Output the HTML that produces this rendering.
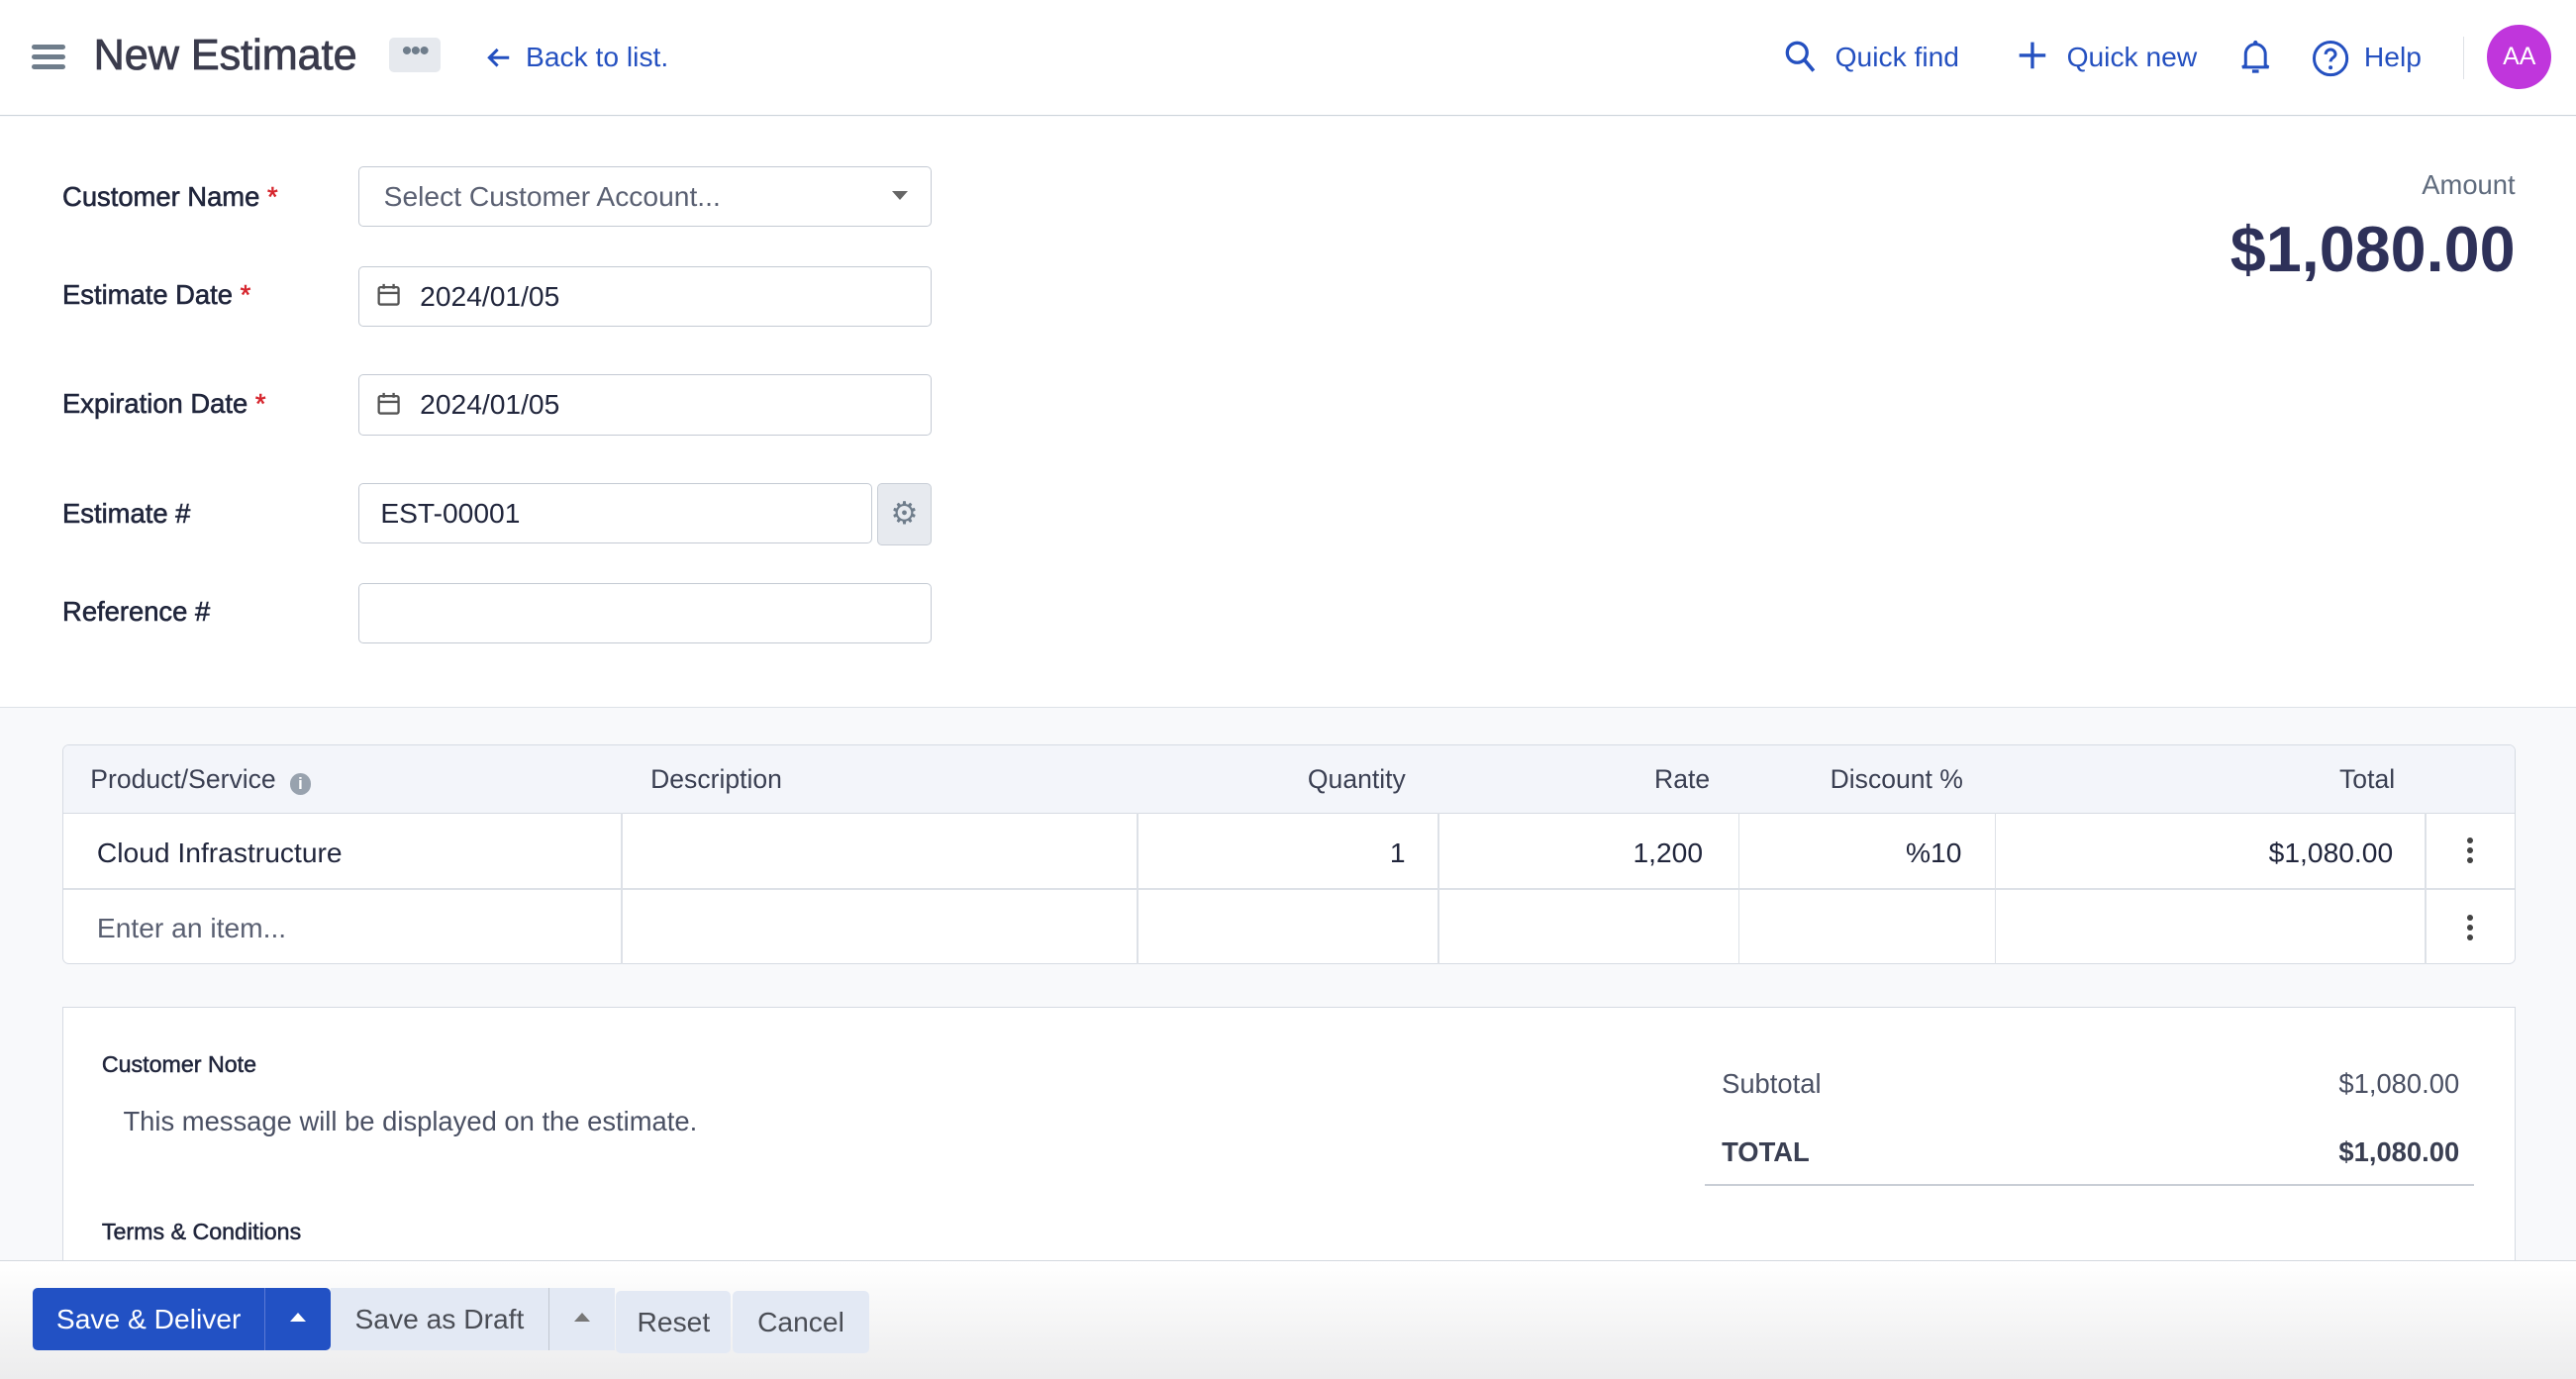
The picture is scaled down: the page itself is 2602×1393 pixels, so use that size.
<!DOCTYPE html>
<html><head><meta charset="utf-8"><style>
html,body{margin:0;padding:0;}
body{width:1568px;height:839px;zoom:1.65944;overflow:hidden;font-family:"Liberation Sans",sans-serif;color:#21263c;background:#f8f9fb;position:relative;}
.abs{position:absolute;}
.hdr{left:0;top:0;width:1568px;height:70px;background:#fff;border-bottom:1px solid #cdd4da;}
.form{left:0;top:71px;width:1568px;height:359px;background:#fff;border-bottom:1px solid #dde2e7;}
.lbl{font-size:16.5px;color:#21263c;left:38px;-webkit-text-stroke:0.35px #21263c;}
.lbl b{color:#d6262e;font-weight:normal;-webkit-text-stroke:0.35px #d6262e;}
.inp{left:218px;width:349px;height:37px;border:1px solid #c4cad3;border-radius:3px;background:#fff;box-sizing:border-box;font-size:17px;line-height:35px;}
.blue{color:#2450c0;}
.tbl{left:38px;top:453px;width:1493px;height:134px;border:1px solid #d6dbe3;border-radius:4px;background:#fff;box-sizing:border-box;overflow:hidden;}
.th{font-size:16px;color:#3a3f52;top:465px;}
.vl{top:495px;height:92px;width:1px;background:#dde1e7;}
.td{font-size:17px;}
.btn{top:784px;height:38px;line-height:38px;font-size:17px;text-align:center;}
</style></head><body>
<div class="abs hdr"></div>
<div class="abs" style="left:19px;top:27px;width:21px;height:3px;background:#6f7d8b;border-radius:2px"></div>
<div class="abs" style="left:19px;top:33px;width:21px;height:3px;background:#6f7d8b;border-radius:2px"></div>
<div class="abs" style="left:19px;top:39px;width:21px;height:3px;background:#6f7d8b;border-radius:2px"></div>
<div class="abs" style="left:57px;top:19px;font-size:26px;color:#3a3b4c;-webkit-text-stroke:0.5px #3a3b4c;">New Estimate</div>
<div class="abs" style="left:237px;top:23px;width:31px;height:21px;background:#e6e9ee;border-radius:3px;text-align:center;line-height:17px;color:#6f7d8b;font-size:18px;letter-spacing:-1px;">•••</div>
<svg class="abs" style="left:296px;top:27px" width="16" height="16" viewBox="0 0 16 16"><path d="M14 8H2M7 3L2 8l5 5" stroke="#2450c0" stroke-width="1.8" fill="none"/></svg>
<div class="abs blue" style="left:320px;top:25px;font-size:17px;">Back to list.</div>
<svg class="abs" style="left:1086px;top:24px" width="20" height="22" viewBox="0 0 20 22"><circle cx="8" cy="8" r="6" stroke="#2450c0" stroke-width="2" fill="none"/><path d="M12.5 12.5L18 19" stroke="#2450c0" stroke-width="2.2"/></svg>
<div class="abs blue" style="left:1117px;top:25px;font-size:17px;">Quick find</div>
<svg class="abs" style="left:1228px;top:25px" width="18" height="18"><path d="M9 1v16M1 9h16" stroke="#2450c0" stroke-width="2"/></svg>
<div class="abs blue" style="left:1258px;top:25px;font-size:17px;">Quick new</div>
<svg class="abs" style="left:1362px;top:23px" width="22" height="24" viewBox="0 0 22 24"><path d="M5 17V10a6 6 0 0112 0v7l2 1H3z" stroke="#2450c0" stroke-width="1.8" fill="none"/><circle cx="11" cy="3" r="1.3" fill="#2450c0"/><path d="M9 20.5h4" stroke="#2450c0" stroke-width="2"/></svg>
<svg class="abs" style="left:1407px;top:24px" width="23" height="23"><circle cx="11.5" cy="11.5" r="10" stroke="#2450c0" stroke-width="1.8" fill="none"/><path d="M8.5 9a3 3 0 116 0c0 2-3 2-3 4.5" stroke="#2450c0" stroke-width="1.8" fill="none"/><circle cx="11.5" cy="17" r="1.2" fill="#2450c0"/></svg>
<div class="abs blue" style="left:1439px;top:25px;font-size:17px;">Help</div>
<div class="abs" style="left:1499px;top:22px;width:1px;height:26px;background:#dde1e6"></div>
<div class="abs" style="left:1514px;top:15px;width:39px;height:39px;border-radius:50%;background:#c036dc;color:#fff;font-size:15px;text-align:center;line-height:39px;">AA</div>

<div class="abs form"></div>
<div class="abs lbl" style="top:110px">Customer Name <b>*</b></div>
<div class="abs inp" style="top:101px;padding-left:15px;color:#5a6072">Select Customer Account...<span style="position:absolute;right:14px;top:15px;border:5px solid transparent;border-top:6px solid #666;"></span></div>
<div class="abs lbl" style="top:170px">Estimate Date <b>*</b></div>
<div class="abs inp" style="top:162px;padding-left:37px">2024/01/05<svg style="position:absolute;left:11px;top:10px" width="14" height="14"><rect x="1" y="2.5" width="12" height="10.5" rx="1" stroke="#555" stroke-width="1.4" fill="none"/><path d="M1 6h12M4 0.5v3M10 0.5v3" stroke="#555" stroke-width="1.4"/></svg></div>
<div class="abs lbl" style="top:236px">Expiration Date <b>*</b></div>
<div class="abs inp" style="top:228px;padding-left:37px">2024/01/05<svg style="position:absolute;left:11px;top:10px" width="14" height="14"><rect x="1" y="2.5" width="12" height="10.5" rx="1" stroke="#555" stroke-width="1.4" fill="none"/><path d="M1 6h12M4 0.5v3M10 0.5v3" stroke="#555" stroke-width="1.4"/></svg></div>
<div class="abs lbl" style="top:303px">Estimate #</div>
<div class="abs inp" style="top:294px;width:313px;padding-left:13px">EST-00001</div>
<div class="abs" style="left:534px;top:294px;width:33px;height:38px;background:#e7eaef;border:1px solid #c8ced6;box-sizing:border-box;border-radius:3px;text-align:center;line-height:35px;color:#6f7d8b;font-size:19px;">⚙</div>
<div class="abs lbl" style="top:363px">Reference #</div>
<div class="abs inp" style="top:355px"></div>

<div class="abs" style="right:37px;top:103px;font-size:16.5px;color:#5f6b7d">Amount</div>
<div class="abs" style="right:37px;top:129px;font-size:39px;color:#2e3159;font-weight:bold;">$1,080.00</div>

<div class="abs tbl"><div style="height:41px;background:#f3f5fa;border-bottom:1px solid #d6dbe3"></div><div style="position:absolute;top:87px;left:0;right:0;height:1px;background:#dde1e7"></div></div>
<div class="abs th" style="left:55px">Product/Service <span style="display:inline-block;width:13px;height:13px;border-radius:50%;background:#98a2ae;color:#fff;font-size:10px;text-align:center;line-height:13px;vertical-align:-1px;margin-left:4px;font-weight:bold">i</span></div>
<div class="abs th" style="left:396px">Description</div>
<div class="abs th" style="left:796px">Quantity</div>
<div class="abs th" style="left:1007px">Rate</div>
<div class="abs th" style="left:1114px">Discount %</div>
<div class="abs th" style="left:1424px">Total</div>
<div class="abs vl" style="left:378px"></div><div class="abs vl" style="left:692px"></div><div class="abs vl" style="left:875px"></div><div class="abs vl" style="left:1058px"></div><div class="abs vl" style="left:1214px"></div><div class="abs vl" style="left:1476px"></div>
<div class="abs td" style="left:59px;top:509px">Cloud Infrastructure</div>
<div class="abs td" style="left:846px;top:509px">1</div>
<div class="abs td" style="left:994px;top:509px">1,200</div>
<div class="abs td" style="left:1160px;top:509px">%10</div>
<div class="abs td" style="left:1381px;top:509px">$1,080.00</div>
<div class="abs td" style="left:59px;top:555px;color:#5a6072">Enter an item...</div>
<div class="abs" style="left:1502px;top:510px;width:4px;font-size:0"><div style="width:3.5px;height:3.5px;border-radius:50%;background:#444;margin-bottom:2.5px"></div><div style="width:3.5px;height:3.5px;border-radius:50%;background:#444;margin-bottom:2.5px"></div><div style="width:3.5px;height:3.5px;border-radius:50%;background:#444"></div></div>
<div class="abs" style="left:1502px;top:557px;width:4px;font-size:0"><div style="width:3.5px;height:3.5px;border-radius:50%;background:#444;margin-bottom:2.5px"></div><div style="width:3.5px;height:3.5px;border-radius:50%;background:#444;margin-bottom:2.5px"></div><div style="width:3.5px;height:3.5px;border-radius:50%;background:#444"></div></div>

<div class="abs" style="left:38px;top:613px;width:1493px;height:200px;background:#fff;border:1px solid #d6dbe3;box-sizing:border-box"></div>
<div class="abs" style="left:62px;top:640px;font-size:14px;color:#21263c;-webkit-text-stroke:0.3px #21263c">Customer Note</div>
<div class="abs" style="left:75px;top:673px;font-size:16.5px;color:#4a5063">This message will be displayed on the estimate.</div>
<div class="abs" style="left:62px;top:742px;font-size:14px;color:#21263c;-webkit-text-stroke:0.3px #21263c">Terms &amp; Conditions</div>
<div class="abs" style="left:1048px;top:650px;font-size:16.5px;color:#4a5063">Subtotal</div>
<div class="abs" style="right:71px;top:650px;font-size:16.5px;color:#4a5063">$1,080.00</div>
<div class="abs" style="left:1048px;top:692px;font-size:16.5px;font-weight:bold;color:#3a3f52">TOTAL</div>
<div class="abs" style="right:71px;top:692px;font-size:16.5px;font-weight:bold;color:#3a3f52">$1,080.00</div>
<div class="abs" style="left:1038px;top:721px;width:468px;height:1px;background:#c9ced6"></div>

<div class="abs" style="left:0;top:767px;width:1568px;height:72px;border-top:1px solid #d3d8de;background:linear-gradient(#fff,#ececed)"></div>
<div class="abs btn" style="left:20px;width:141px;background:#2251c4;color:#fff;border-radius:3px 0 0 3px">Save &amp; Deliver</div>
<div class="abs btn" style="left:161px;width:40px;background:#2251c4;border-left:1px solid #5a7ad6;box-sizing:border-box;border-radius:0 3px 3px 0"><span style="display:inline-block;border:5px solid transparent;border-bottom:6px solid #fff;vertical-align:4px"></span></div>
<div class="abs btn" style="left:201px;width:133px;background:#e3e9f4;color:#4a4d55">Save as Draft</div>
<div class="abs btn" style="left:334px;width:40px;background:#e3e9f4;border-left:1px solid #c2c8d0;box-sizing:border-box"><span style="display:inline-block;border:5px solid transparent;border-bottom:6px solid #777;vertical-align:4px"></span></div>
<div class="abs btn" style="left:375px;top:786px;width:70px;background:#e3e9f4;color:#4a4d55;border-radius:3px">Reset</div>
<div class="abs btn" style="left:446px;top:786px;width:83px;background:#e3e9f4;color:#4a4d55;border-radius:3px">Cancel</div>
</body></html>
